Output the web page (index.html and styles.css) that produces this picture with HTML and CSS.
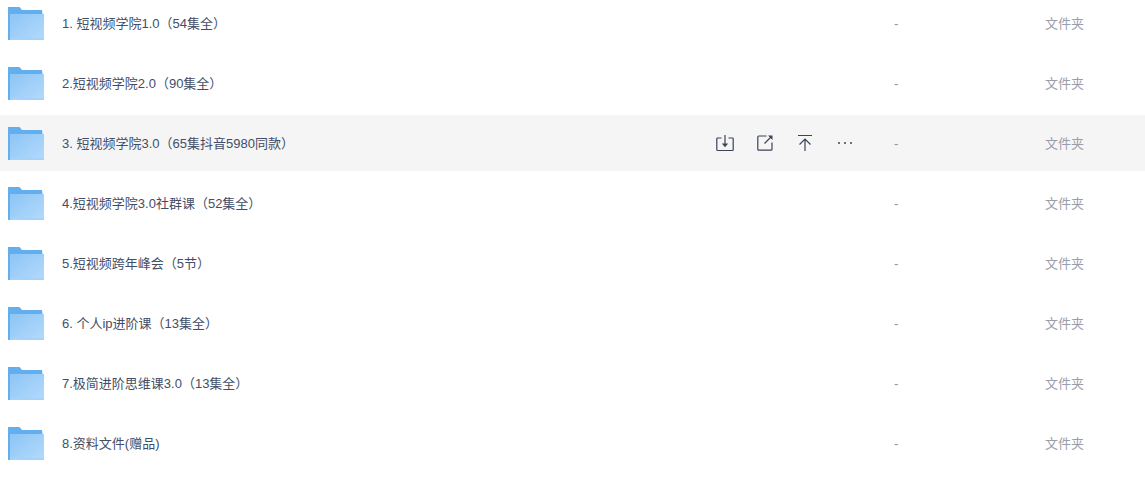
FILE: index.html
```html
<!DOCTYPE html>
<html lang="en">
<head>
    <meta charset="UTF-8">
    <meta name="viewport" content="width=device-width, initial-scale=1.0">
    <title>文件列表</title>
    <link rel="stylesheet" href="styles.css">
</head>
<body>
    <svg class="defs" width="0" height="0">
        <defs>
            <linearGradient id="folderFront" x1="0" y1="0" x2="1" y2="1">
                <stop offset="0" stop-color="#8cc5f5"/>
                <stop offset="1" stop-color="#b4dafc"/>
            </linearGradient>
            <symbol id="folder" viewBox="0 0 36 33">
                <path d="M0 0H11.500L14 3H34L34.500 7H2V33H0Z" fill="#62aeef"/>
                <path d="M2 7H36V33H2Z" fill="url(#folderFront)"/>
                <path d="M2 31H36V33H2Z" fill="#a4d2fa"/>
                <path d="M27 12.500H32M27 14.500H32" stroke="#a3cdf1" stroke-width="1"/>
            </symbol>
        </defs>
    </svg>
    <div class="file-list">
        <div class="file-row">
            <svg class="folder-icon"><use href="#folder"/></svg>
            <div class="file-name">1. 短视频学院1.0（54集全）</div>
            <div class="file-size">-</div>
            <div class="file-type">文件夹</div>
        </div>
        <div class="file-row">
            <svg class="folder-icon"><use href="#folder"/></svg>
            <div class="file-name">2.短视频学院2.0（90集全）</div>
            <div class="file-size">-</div>
            <div class="file-type">文件夹</div>
        </div>
        <div class="file-row active">
            <svg class="folder-icon"><use href="#folder"/></svg>
            <div class="file-name">3. 短视频学院3.0（65集抖音5980同款）</div>
            <div class="file-actions">
                <svg class="action-icon" viewBox="0 0 20 20"><path d="M6.500 5H2.600A.8.8 0 0 0 1.800 5.800V16.700A.8.8 0 0 0 2.600 17.500H17.400A.8.8 0 0 0 18.200 16.700V5.800A.8.8 0 0 0 17.400 5H13.500M10 2V12.500"/><path class="solid" d="M6.800 10.500H13.200L10 14.200Z"/></svg>
                <svg class="action-icon" viewBox="0 0 20 20"><path d="M11.500 3H3.800A1 1 0 0 0 2.800 4V16.200A1 1 0 0 0 3.800 17.200H16A1 1 0 0 0 17 16.200V9.500M9.500 10.500L16.500 3.500"/><path class="solid" d="M13 2.500H17.500V7Z"/></svg>
                <svg class="action-icon" viewBox="0 0 20 20"><path d="M3 2.500H17M10 18V6M4.500 11.500L10 6L15.500 11.500"/></svg>
                <svg class="action-icon" viewBox="0 0 20 20"><circle class="solid" cx="4" cy="10" r="1"/><circle class="solid" cx="10" cy="10" r="1"/><circle class="solid" cx="16" cy="10" r="1"/></svg>
            </div>
            <div class="file-size">-</div>
            <div class="file-type">文件夹</div>
        </div>
        <div class="file-row">
            <svg class="folder-icon"><use href="#folder"/></svg>
            <div class="file-name">4.短视频学院3.0社群课（52集全）</div>
            <div class="file-size">-</div>
            <div class="file-type">文件夹</div>
        </div>
        <div class="file-row">
            <svg class="folder-icon"><use href="#folder"/></svg>
            <div class="file-name">5.短视频跨年峰会（5节）</div>
            <div class="file-size">-</div>
            <div class="file-type">文件夹</div>
        </div>
        <div class="file-row">
            <svg class="folder-icon"><use href="#folder"/></svg>
            <div class="file-name">6. 个人ip进阶课（13集全）</div>
            <div class="file-size">-</div>
            <div class="file-type">文件夹</div>
        </div>
        <div class="file-row">
            <svg class="folder-icon"><use href="#folder"/></svg>
            <div class="file-name">7.极简进阶思维课3.0（13集全）</div>
            <div class="file-size">-</div>
            <div class="file-type">文件夹</div>
        </div>
        <div class="file-row">
            <svg class="folder-icon"><use href="#folder"/></svg>
            <div class="file-name">8.资料文件(赠品)</div>
            <div class="file-size">-</div>
            <div class="file-type">文件夹</div>
        </div>
    </div>
</body>
</html>
```

FILE: styles.css
```css
html, body {
    height: 100%;
    overflow: hidden;
}
body {
    font-family: "Liberation Sans", "Noto Sans CJK SC", sans-serif;
    font-size: 13px;
    line-height: 18px;
    color: #424e67;
    background: white;
    margin: 0;
}
.defs {
    display: block;
    height: 0;
}
.file-list {
    display: flex;
    flex-direction: column;
    gap: 4px;
    margin-top: -5px;
}
.file-row {
    display: flex;
    align-items: center;
    height: 56px;
    padding-left: 8px;
}
.file-row.active {
    background: #f5f5f5;
}
.folder-icon {
    width: 36px;
    height: 33px;
    flex: none;
    margin-right: 18px;
}
.file-name {
    flex: 1;
    white-space: nowrap;
    padding-top: 1px;
}
.file-actions {
    display: flex;
    gap: 20px;
    margin-right: 39px;
}
.action-icon {
    width: 20px;
    height: 20px;
    fill: none;
    stroke: #3b4358;
    stroke-width: 1.200;
}
.action-icon .solid {
    fill: #3b4358;
    stroke: none;
}
.file-size {
    width: 151px;
    flex: none;
    color: #8f93a3;
    padding-top: 1px;
}
.file-type {
    width: 100px;
    flex: none;
    color: #9a9eab;
    padding-top: 1px;
}
```
